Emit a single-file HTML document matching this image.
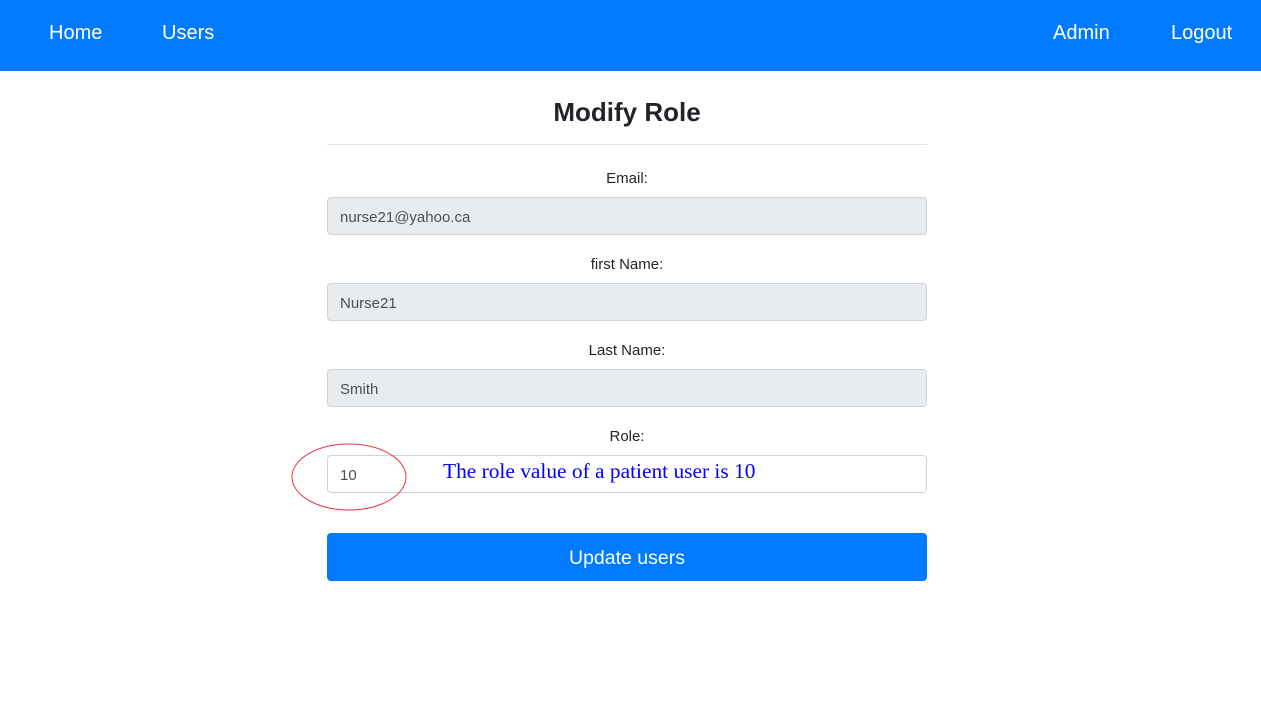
<!DOCTYPE html>
<html><head><style>
*{box-sizing:border-box;margin:0;padding:0}
body{width:1261px;height:708px;background:#fff;font-family:"Liberation Sans",sans-serif;color:#212529;position:relative;overflow:hidden}
.nav{position:absolute;left:0;top:0;width:1261px;height:71px;background:#007bff}
.nav a{position:absolute;top:22px;color:#fff;font-size:20px;text-decoration:none}
h1{position:absolute;left:327px;width:600px;top:97px;text-align:center;font-size:26px;font-weight:bold}
.hr{position:absolute;left:327px;width:600px;top:144px;border-top:1px solid #e2e2e2}
.lbl{position:absolute;left:327px;width:600px;text-align:center;font-size:15px}
.inp{position:absolute;left:327px;width:600px;height:38px;border:1px solid #ced4da;border-radius:4px;background:#e9ecef;font-size:15px;color:#495057;padding:11px 12px 0}
.btn{position:absolute;left:327px;top:533px;width:600px;height:48px;background:#007bff;border-radius:4px;color:#fff;font-size:19.5px;text-align:center;line-height:50px}
</style></head><body>
<div class="nav"><a style="left:49px">Home</a><a style="left:162px">Users</a><a style="left:1053px">Admin</a><a style="left:1171px">Logout</a></div>
<h1>Modify Role</h1><div class="hr"></div>
<div class="lbl" style="top:170px">Email:</div>
<div class="inp" style="top:197px">nurse21@yahoo.ca</div>
<div class="lbl" style="top:256px">first Name:</div>
<div class="inp" style="top:283px">Nurse21</div>
<div class="lbl" style="top:342px">Last Name:</div>
<div class="inp" style="top:369px">Smith</div>
<div class="lbl" style="top:428px">Role:</div>
<div class="inp" style="top:455px;background:#fff">10</div>
<div style="position:absolute;left:443px;top:459px;font-family:'Liberation Serif',serif;font-size:21.4px;color:#0000ff;white-space:nowrap">The role value of a patient user is 10</div>
<svg style="position:absolute;left:290px;top:443px" width="120" height="70"><ellipse cx="59" cy="34" rx="57" ry="33" fill="none" stroke="#e8323c" stroke-width="1"/></svg>
<div class="btn">Update users</div>
</body></html>
